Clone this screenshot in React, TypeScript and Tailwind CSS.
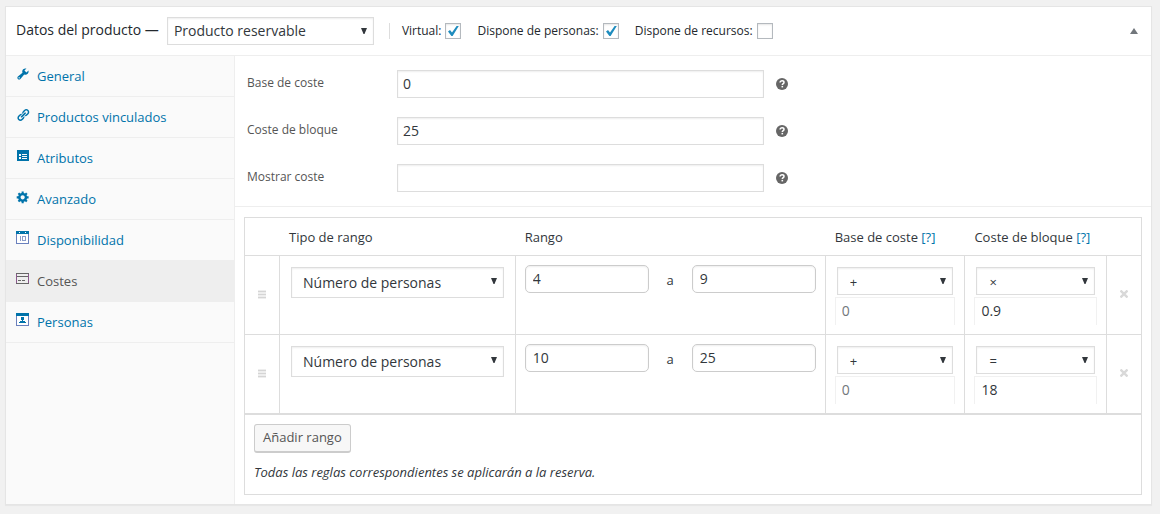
import { useState } from 'react';
import type { ReactNode } from 'react';

type Range = {
  from: string;
  to: string;
  baseModifier: string;
  base: string;
  blockModifier: string;
  block: string;
};

const initialRanges: Range[] = [
  { from: '4', to: '9', baseModifier: '+', base: '', blockModifier: '×', block: '0.9' },
  { from: '10', to: '25', baseModifier: '+', base: '', blockModifier: '=', block: '18' },
];

const modifiers = ['+', '-', '×', '÷', '='];

const tabs: { name: string; icon: ReactNode }[] = [
  {
    name: 'General',
    icon: (
      <svg viewBox="0 0 20 20" className="w-[14px] h-[14px]" fill="currentColor">
        <path d="M16.68 9.77c-1.34 1.34-3.3 1.67-4.95.99l-5.41 6.52c-.99.99-2.59.99-3.58 0s-.99-2.59 0-3.57l6.52-5.42c-.68-1.65-.35-3.61.99-4.95 1.28-1.28 3.12-1.62 4.72-1.06l-2.89 2.89 2.82 2.82 2.86-2.87c.53 1.58.18 3.39-1.08 4.65zM3.81 16.21c.4.39 1.04.39 1.43 0 .4-.4.4-1.04 0-1.43-.39-.4-1.03-.4-1.43 0-.39.39-.39 1.03 0 1.43z" />
      </svg>
    ),
  },
  {
    name: 'Productos vinculados',
    icon: (
      <svg viewBox="0 0 20 20" className="w-[14px] h-[14px]" fill="currentColor">
        <path d="M17.74 2.76c1.68 1.69 1.68 4.41 0 6.1l-1.53 1.52c-1.12 1.12-2.7 1.47-4.14 1.09l2.62-2.61.76-.77.76-.76c.84-.84.84-2.2 0-3.04-.84-.85-2.2-.85-3.04 0l-.77.76-3.38 3.38c-.37-1.44-.02-3.02 1.1-4.14l1.52-1.53c1.69-1.68 4.42-1.68 6.1 0zM8.59 13.43l5.34-5.34c.42-.42.42-1.1 0-1.52-.44-.43-1.13-.39-1.53 0l-5.33 5.34c-.42.42-.42 1.1 0 1.52.44.43 1.13.39 1.52 0zm-.76 2.29l4.14-4.15c.38 1.44.03 3.02-1.09 4.14l-1.52 1.53c-1.69 1.68-4.41 1.68-6.1 0-1.68-1.68-1.68-4.42 0-6.1l1.53-1.52c1.12-1.12 2.7-1.47 4.14-1.1l-4.14 4.15c-.85.84-.85 2.2 0 3.05.84.84 2.2.84 3.04 0z" />
      </svg>
    ),
  },
  {
    name: 'Atributos',
    icon: (
      <svg viewBox="0 0 14 14" className="w-[14px] h-[14px]" fill="currentColor">
        <path fillRule="evenodd" d="M1 1h12v11H1zM2 4v7h10V4z" />
        <path fillRule="evenodd" d="M2 4h10v7H2zM3 5v2h2V5zM6 5v1h5V5zM6 7v1h5V7zM3 8v2h2V8zM6 9v1h5V9z" />
      </svg>
    ),
  },
  {
    name: 'Avanzado',
    icon: (
      <svg viewBox="0 0 20 20" className="w-[14px] h-[14px]" fill="currentColor">
        <path d="M18 12h-2.18c-.17.7-.44 1.35-.81 1.93l1.54 1.54-2.1 2.1-1.54-1.54c-.58.36-1.23.63-1.91.79V19H8v-2.18c-.68-.16-1.33-.43-1.91-.79l-1.54 1.54-2.12-2.12 1.54-1.54c-.36-.58-.63-1.23-.79-1.91H1V9.03h2.17c.16-.7.44-1.35.8-1.94L2.43 5.55l2.1-2.1 1.54 1.54c.58-.37 1.24-.64 1.93-.81V2h3v2.18c.68.16 1.33.43 1.91.79l1.54-1.54 2.12 2.12-1.54 1.54c.36.59.64 1.24.8 1.94H18V12zm-8.5 1.5c1.66 0 3-1.34 3-3s-1.34-3-3-3-3 1.34-3 3 1.34 3 3 3z" />
      </svg>
    ),
  },
  {
    name: 'Disponibilidad',
    icon: (
      <svg viewBox="0 0 14 14" className="w-[14px] h-[14px]" shapeRendering="crispEdges">
        <path fill="#6a80bd" d="M0 3h1v10H0zM12 3h1v10h-1zM0 12h13v1H0z" />
        <path fill="#fff" d="M1 4h11v8H1z" />
        <path fill="#0073aa" d="M0 0h13v3H0z" />
        <path fill="#fff" d="M3 1h1v1H3zM9 1h1v1H9z" />
        <path fill="#8a9cc9" d="M4 5h1v5H4zM6 5h4v5H6z" />
        <path fill="#fff" d="M7 6h2v3H7z" />
      </svg>
    ),
  },
  {
    name: 'Costes',
    icon: (
      <svg viewBox="0 0 14 14" className="w-[14px] h-[14px]" shapeRendering="crispEdges">
        <path fill="#8a5a8c" d="M0 1h1v11H0zM12 1h1v11h-1z" />
        <path fill="#666" d="M0 1h13v1H0zM1 4h11v1H1zM0 11h13v1H0zM2 8h3v1H2zM6 8h3v1H6z" />
      </svg>
    ),
  },
  {
    name: 'Personas',
    icon: (
      <svg viewBox="0 0 14 14" className="w-[14px] h-[14px]" shapeRendering="crispEdges">
        <path fill="#6a80bd" d="M0 3h1v10H0zM12 3h1v10h-1zM0 12h13v1H0z" />
        <path fill="#fff" d="M1 3h11v9H1z" />
        <path fill="#0073aa" d="M0 0h13v3H0zM5 4h3v3H5zM6 7h1v1H6zM4 8h5v1H4zM3 9h7v1H3z" />
      </svg>
    ),
  },
];

function Select({ label, options, className }: { label: string; options: string[]; className: string }) {
  return (
    <div className="relative">
      <select
        aria-label={label}
        className={`block w-full appearance-none border border-[#ddd] bg-white text-[#32373c] shadow-[inset_0_1px_2px_rgba(0,0,0,0.07)] ${className}`}
      >
        {options.map((option) => (
          <option key={option}>{option}</option>
        ))}
      </select>
      <svg viewBox="0 0 6 6" className="pointer-events-none absolute right-[7px] top-[11px] w-[6px] h-[6px]" fill="#32373c">
        <path d="M0 0h6L3.5 6h-1z" />
      </svg>
    </div>
  );
}

function Check({ label, checked = false }: { label: string; checked?: boolean }) {
  return (
    <label className="flex items-center gap-1 text-xs font-medium text-[#23282d]">
      {label}
      <span className="relative block w-4 h-4">
        <input
          type="checkbox"
          defaultChecked={checked}
          className="peer block w-4 h-4 appearance-none border border-[#b4b9be] bg-white shadow-[inset_0_1px_2px_rgba(0,0,0,0.1)]"
        />
        <svg viewBox="0 0 16 16" className="pointer-events-none absolute inset-0 hidden peer-checked:block" fill="#1e8cbe">
          <path d="M3 8.5l2-1.4 2 2.3L11.6 3h2.2L7.6 13H6.4z" />
        </svg>
      </span>
    </label>
  );
}

function CostField({ id, label, value }: { id: string; label: string; value: string }) {
  return (
    <div className="flex items-start pl-3 pr-5">
      <label htmlFor={id} className="w-[150px] shrink-0 pt-1 text-xs leading-[18px] text-[#555]">
        {label}
      </label>
      <div className="flex flex-1 items-center gap-3">
        <input
          id={id}
          type="text"
          defaultValue={value}
          className="w-1/2 h-7 px-[5px] pb-[2px] border border-[#ddd] bg-white text-sm text-[#32373c] shadow-[inset_0_1px_2px_rgba(0,0,0,0.07)]"
        />
        <svg viewBox="0 0 12 12" className="w-3 h-3">
          <circle cx="6" cy="6" r="6" fill="#666" />
          <path d="M4.1 4.6C4.1 3.4 5 2.8 6.1 2.8s1.9.7 1.9 1.6C8 5.6 6.3 5.7 6.3 7" fill="none" stroke="#fff" strokeWidth="1.5" />
          <path d="M5.5 7.9h1.6v1.5H5.5z" fill="#fff" />
        </svg>
      </div>
    </div>
  );
}

function RangeRow({ range }: { range: Range }) {
  const cell = 'h-[79px] border-r border-b border-[#ddd] align-top';
  const rangeInput =
    'min-w-0 flex-1 h-7 px-[7px] pb-[2px] rounded-[5px] border border-[#ccc] bg-white text-sm text-[#32373c] shadow-[inset_0_1px_2px_rgba(0,0,0,0.07)]';
  const costInput =
    'block w-full h-7 px-[6px] pb-[2px] border border-b-0 border-[#f1f1f1] bg-white text-sm text-[#32373c] placeholder:text-[#72777c]';

  return (
    <tr>
      <td className={`${cell} pt-[34px]`}>
        <svg viewBox="0 0 8 9" className="mx-auto w-2 h-[9px]" shapeRendering="crispEdges">
          <path fill="#eee" d="M0 0h8v9H0z" />
          <path fill="#d5d5d5" d="M0 1h8v1H0zM0 4h8v1H0zM0 7h8v1H0z" />
        </svg>
      </td>
      <td className={`${cell} px-[11px] pt-[11px]`}>
        <Select label="Tipo de rango" options={['Número de personas', 'Número de bloques']} className="h-[31px] pl-[11px] pr-5 text-sm" />
      </td>
      <td className={`${cell} px-[9px] pt-[9px]`}>
        <div className="flex items-center">
          <input type="text" aria-label="Desde" defaultValue={range.from} className={rangeInput} />
          <span className="w-[43px] pt-1 text-center text-[13px] text-[#32373c]">a</span>
          <input type="text" aria-label="Hasta" defaultValue={range.to} className={rangeInput} />
        </div>
      </td>
      <td className={`${cell} px-[9px] pt-[11px]`}>
        <div className="px-[2px] pb-[2px]">
          <Select
            label="Modificador de base"
            options={[range.baseModifier, ...modifiers.filter((m) => m !== range.baseModifier)]}
            className="h-7 pl-3 pr-5 pt-1 text-[13px]"
          />
        </div>
        <input type="text" aria-label="Base de coste" defaultValue={range.base} placeholder="0" className={costInput} />
      </td>
      <td className={`${cell} px-[9px] pt-[11px]`}>
        <div className="px-[2px] pb-[2px]">
          <Select
            label="Modificador de bloque"
            options={[range.blockModifier, ...modifiers.filter((m) => m !== range.blockModifier)]}
            className="h-7 pl-3 pr-5 pt-1 text-[13px]"
          />
        </div>
        <input type="text" aria-label="Coste de bloque" defaultValue={range.block} placeholder="0" className={costInput} />
      </td>
      <td className="border-b border-[#ddd] pt-[34px] align-top">
        <button type="button" aria-label="Eliminar rango" className="mx-auto block">
          <svg viewBox="0 0 8 8" className="w-2 h-2" stroke="#d9d9d9" strokeWidth="2.4">
            <path d="M0.5 0.5l7 7M7.5 0.5l-7 7" />
          </svg>
        </button>
      </td>
    </tr>
  );
}

export default function App() {
  const [activeTab, setActiveTab] = useState('Costes');
  const [ranges, setRanges] = useState(initialRanges);

  const addRange = () => {
    setRanges([...ranges, { from: '', to: '', baseModifier: '+', base: '', blockModifier: '+', block: '' }]);
  };

  return (
    <div className="min-h-screen bg-[#f1f1f1] pt-[6px] pl-[5px] pr-2 pb-[9px] font-['Open_Sans',sans-serif] text-[13px] text-[#32373c]">
      <section className="border border-[#e5e5e5] bg-white shadow-[0_1px_1px_rgba(0,0,0,0.04)]">
        <header className="flex h-[49px] items-center border-b border-[#eee] pl-[10px] pr-[13px]">
          <h2 className="pb-[2px] text-sm font-medium text-[#23282d]">Datos del producto —</h2>
          <div className="ml-2 w-[207px] shrink-0">
            <Select
              label="Tipo de producto"
              options={['Producto reservable', 'Producto simple', 'Producto variable']}
              className="h-7 pl-[6px] pr-5 text-sm font-medium"
            />
          </div>
          <div className="ml-[15px] flex h-4 items-center gap-4 border-l border-[#ddd] pl-3">
            <Check label="Virtual:" checked />
            <Check label="Dispone de personas:" checked />
            <Check label="Dispone de recursos:" />
          </div>
          <button type="button" aria-label="Plegar panel" className="ml-auto">
            <svg viewBox="0 0 8 6" className="w-2 h-[6px]" fill="#72777c">
              <path d="M4 0l4 6H0z" />
            </svg>
          </button>
        </header>

        <div className="flex">
          <nav className="w-[229px] shrink-0 border-r border-[#eee] bg-[#fafafa]">
            <ul>
              {tabs.map(({ name, icon }) => (
                <li key={name}>
                  <a
                    href="#"
                    onClick={() => setActiveTab(name)}
                    className={`flex h-[41px] items-center gap-[7px] border-b border-[#eee] pl-[10px] ${
                      activeTab === name ? 'bg-[#eee] text-[#555]' : 'text-[#0073aa]'
                    }`}
                  >
                    <span className="pb-1">{icon}</span>
                    <span className="pt-[2px]">{name}</span>
                  </a>
                </li>
              ))}
            </ul>
          </nav>

          <div className="min-w-0 flex-1">
            <div className="flex flex-col gap-[19px] border-b border-[#eee] py-[14px]">
              <CostField id="base-cost" label="Base de coste" value="0" />
              <CostField id="block-cost" label="Coste de bloque" value="25" />
              <CostField id="display-cost" label="Mostrar coste" value="" />
            </div>

            <div className="mx-[9px] mt-[10px] mb-[9px] border border-[#ddd]">
              <table className="w-full table-fixed border-separate border-spacing-0">
                <colgroup>
                  <col className="w-[35px]" />
                  <col className="w-[26.3%]" />
                  <col className="w-[34.6%]" />
                  <col className="w-[15.6%]" />
                  <col />
                  <col className="w-[34px]" />
                </colgroup>
                <thead>
                  <tr className="h-[38px] text-left">
                    <th className="border-b border-[#ddd]" />
                    <th className="border-b border-[#ddd] px-[9px] pt-[2px] font-normal">Tipo de rango</th>
                    <th className="border-b border-[#ddd] px-[9px] pt-[2px] font-normal">Rango</th>
                    <th className="border-b border-[#ddd] pl-[9px] pt-[2px] font-normal whitespace-nowrap">
                      Base de coste <a href="#" className="text-[#0073aa]">[?]</a>
                    </th>
                    <th className="border-b border-[#ddd] pl-[9px] pt-[2px] font-normal whitespace-nowrap">
                      Coste de bloque <a href="#" className="text-[#0073aa]">[?]</a>
                    </th>
                    <th className="border-b border-[#ddd]" />
                  </tr>
                </thead>
                <tbody>
                  {ranges.map((range, index) => (
                    <RangeRow key={index} range={range} />
                  ))}
                </tbody>
              </table>
              <div className="border-t border-[#ddd] px-[9px] pt-[9px] pb-3">
                <button
                  type="button"
                  onClick={addRange}
                  className="h-[29px] rounded-[3px] border border-b-2 border-[#ccc] bg-[#f7f7f7] px-2 text-[13px] text-[#555]"
                >
                  Añadir rango
                </button>
                <p className="mt-[10px] leading-[19px] italic">Todas las reglas correspondientes se aplicarán a la reserva.</p>
              </div>
            </div>
          </div>
        </div>
      </section>
    </div>
  );
}
